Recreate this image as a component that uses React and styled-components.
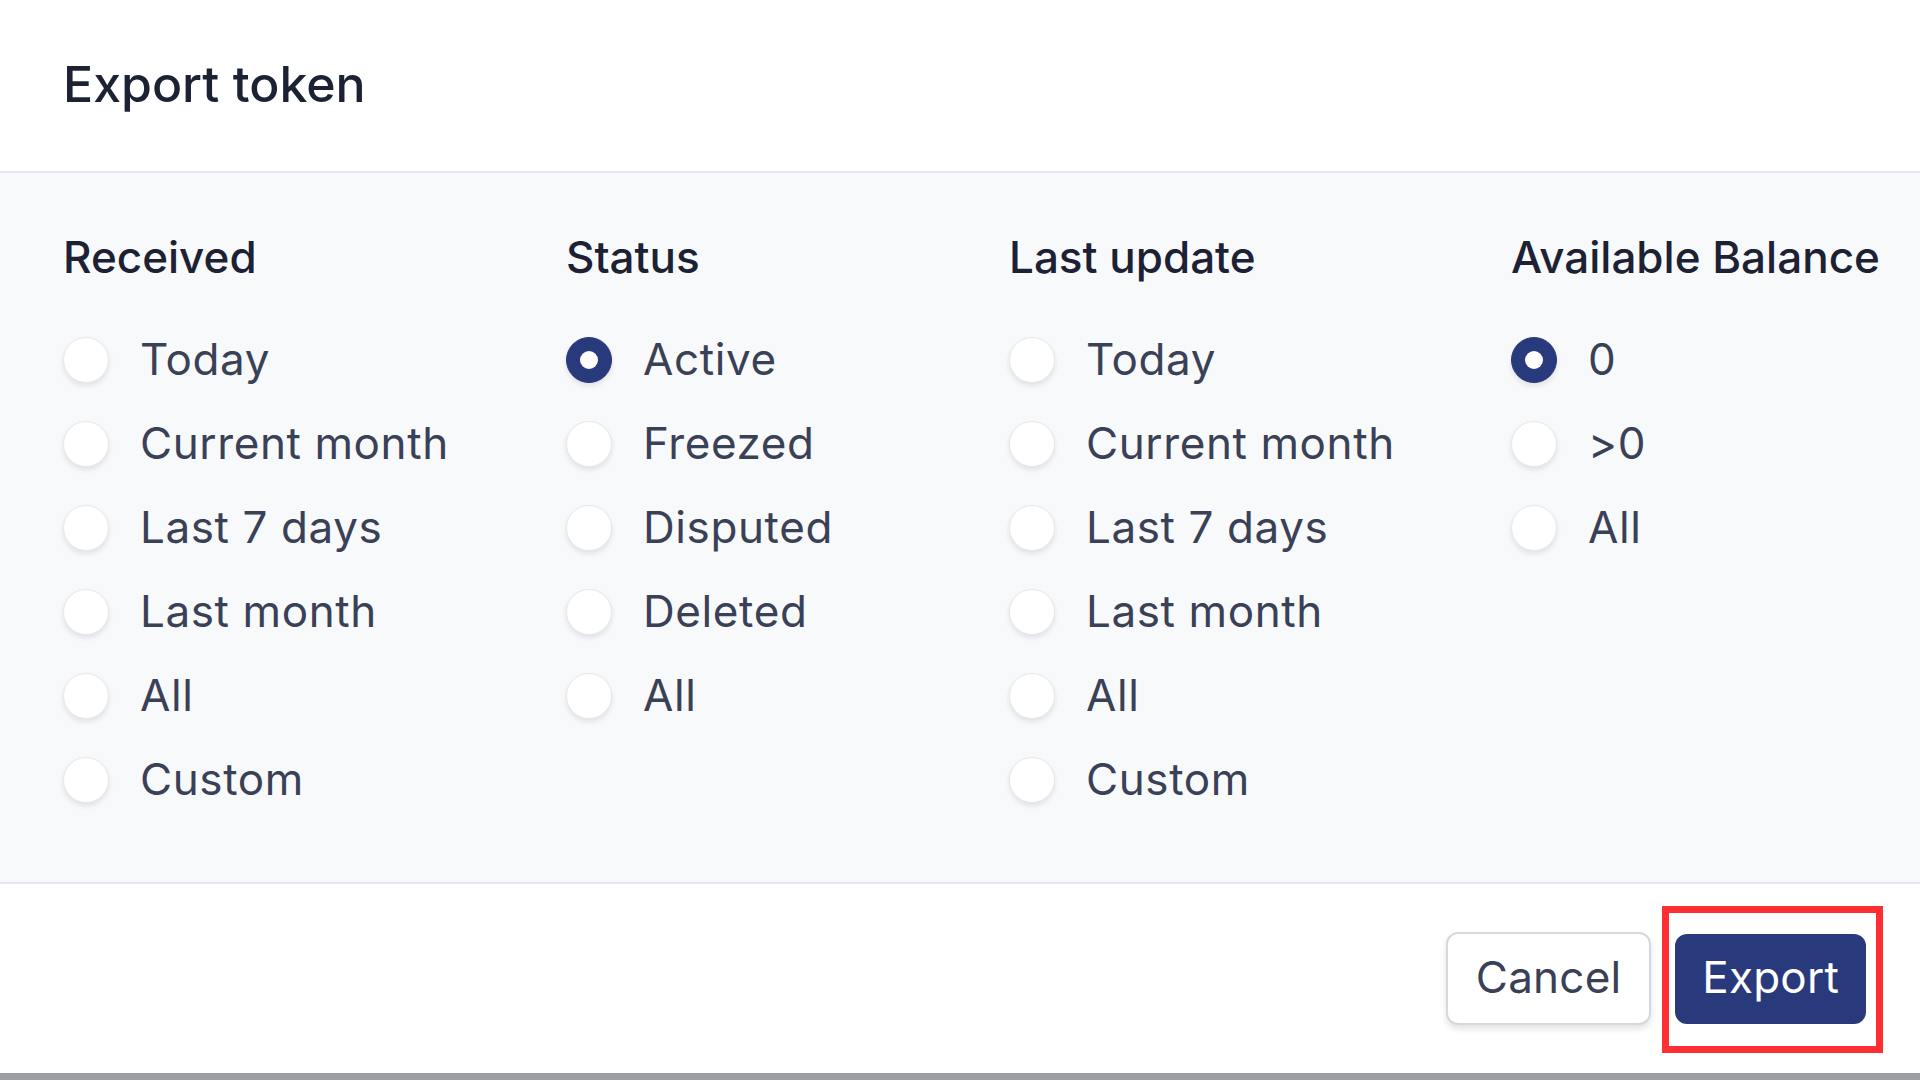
import React, { useState } from 'react';
import styled, { createGlobalStyle } from 'styled-components';

const GlobalStyle = createGlobalStyle`
  html, body {
    margin: 0;
    padding: 0;
    background: #9c9ea2;
  }
  body {
    font-family: Inter, "Noto Sans", "Liberation Sans", sans-serif;
    -webkit-font-smoothing: antialiased;
  }
`;

const Modal = styled.div`
  width: 1920px;
  height: 1073px;
  background: #fff;
  display: flex;
  flex-direction: column;
  overflow: hidden;
`;

const Header = styled.div`
  height: 173px;
  flex-shrink: 0;
  box-sizing: border-box;
  display: flex;
  align-items: center;
  padding: 0 0 4px 63px;
  border-bottom: 2px solid #e4e8ee;
`;

const Title = styled.h2`
  margin: 0;
  font-size: 50px;
  line-height: 1;
  font-weight: 500;
  color: #1c2133;
`;

const Body = styled.div`
  flex-shrink: 0;
  background: #f8f9fb;
  border-bottom: 2px solid #e4e8ee;
  padding: 62px 0 60px 63px;
  display: grid;
  grid-template-columns: 503px 443px 502px 1fr;
`;

const Column = styled.div`
  display: flex;
  flex-direction: column;
`;

const ColumnTitle = styled.div`
  font-size: 44px;
  line-height: 1;
  font-weight: 500;
  color: #1c2133;
  margin-bottom: 39px;
  white-space: nowrap;
`;

const Option = styled.label`
  height: 84px;
  display: flex;
  align-items: center;
  gap: 31px;
  cursor: pointer;
`;

const Radio = styled.span`
  width: 46px;
  height: 46px;
  border-radius: 50%;
  flex-shrink: 0;
  box-sizing: border-box;
  display: flex;
  align-items: center;
  justify-content: center;
  background: ${(p) => (p.checked ? '#283a7c' : '#fff')};
  border: 1px solid ${(p) => (p.checked ? '#283a7c' : '#e6e8ec')};
  box-shadow: 0 3px 5px rgba(20, 30, 50, 0.1);

  &::after {
    content: '';
    display: ${(p) => (p.checked ? 'block' : 'none')};
    width: 18px;
    height: 18px;
    border-radius: 50%;
    background: #fff;
  }
`;

const OptionText = styled.span`
  font-size: 44px;
  line-height: 1;
  font-weight: 400;
  letter-spacing: 0.6px;
  color: #3a4156;
  white-space: nowrap;
  padding-bottom: 2px;
`;

const Footer = styled.div`
  flex: 1;
  display: flex;
  align-items: center;
  justify-content: flex-end;
  gap: 24px;
  padding-right: 54px;
`;

const Button = styled.button`
  font-family: inherit;
  font-size: 44px;
  line-height: 1;
  font-weight: 400;
  letter-spacing: 0.2px;
  border-radius: 12px;
  cursor: pointer;
  box-sizing: border-box;
  padding-bottom: 5px;
`;

const CancelButton = styled(Button)`
  height: 93px;
  padding-left: 28px;
  padding-right: 28px;
  background: #fff;
  color: #3a4156;
  border: 2px solid #d6d8dd;
  box-shadow: 0 4px 6px rgba(20, 30, 50, 0.12);
`;

const ExportButton = styled(Button)`
  height: 90px;
  padding-left: 27px;
  padding-right: 27px;
  background: #283a7c;
  color: #fff;
  border: none;
`;

const Highlight = styled.div`
  position: relative;
  display: flex;
`;

// red annotation frame drawn over the export button
const HighlightFrame = styled.span`
  position: absolute;
  left: -13px;
  right: -17px;
  top: -28px;
  bottom: -29px;
  border: 7px solid #fd2f32;
  pointer-events: none;
`;

const groups = [
  { key: 'received', title: 'Received', options: ['Today', 'Current month', 'Last 7 days', 'Last month', 'All', 'Custom'], initial: null },
  { key: 'status', title: 'Status', options: ['Active', 'Freezed', 'Disputed', 'Deleted', 'All'], initial: 'Active' },
  { key: 'updated', title: 'Last update', options: ['Today', 'Current month', 'Last 7 days', 'Last month', 'All', 'Custom'], initial: null },
  { key: 'balance', title: 'Available Balance', options: ['0', '>0', 'All'], initial: '0' },
];

const App = () => {
  const [values, setValues] = useState(() =>
    Object.fromEntries(groups.map((g) => [g.key, g.initial]))
  );

  return (
    <>
      <GlobalStyle />
      <Modal>
        <Header>
          <Title>Export token</Title>
        </Header>
        <Body>
          {groups.map((g) => (
            <Column key={g.key}>
              <ColumnTitle>{g.title}</ColumnTitle>
              {g.options.map((opt) => (
                <Option key={opt} onClick={() => setValues({ ...values, [g.key]: opt })}>
                  <Radio checked={values[g.key] === opt} />
                  <OptionText>{opt}</OptionText>
                </Option>
              ))}
            </Column>
          ))}
        </Body>
        <Footer>
          <CancelButton>Cancel</CancelButton>
          <Highlight>
            <ExportButton>Export</ExportButton>
            <HighlightFrame />
          </Highlight>
        </Footer>
      </Modal>
    </>
  );
};

export default App;
